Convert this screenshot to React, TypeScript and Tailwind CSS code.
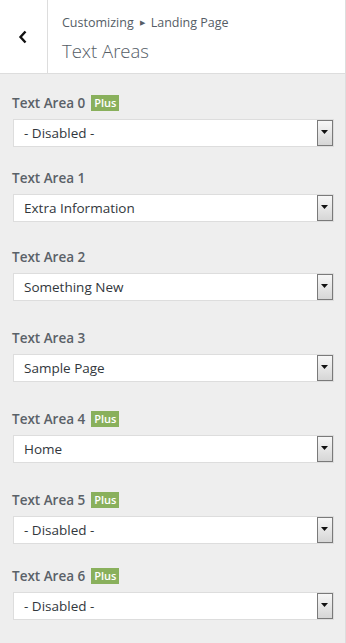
import React from "react";

type Item = { label: string; value: string; plus: boolean; mt: string };

const items: Item[] = [
  { label: "Text Area 0", value: "- Disabled -", plus: true, mt: "mt-0" },
  { label: "Text Area 1", value: "Extra Information", plus: false, mt: "mt-[21px]" },
  { label: "Text Area 2", value: "Something New", plus: false, mt: "mt-[25px]" },
  { label: "Text Area 3", value: "Sample Page", plus: false, mt: "mt-[27px]" },
  { label: "Text Area 4", value: "Home", plus: true, mt: "mt-[27px]" },
  { label: "Text Area 5", value: "- Disabled -", plus: true, mt: "mt-[27px]" },
  { label: "Text Area 6", value: "- Disabled -", plus: true, mt: "mt-[22px]" },
];

function Select({ value }: { value: string }) {
  return (
    <div className="flex h-[28px] w-[321px] items-stretch border border-[#dddddd] bg-white">
      <div className="flex flex-1 items-center pl-[10px] text-[13.5px] text-[#32373c]">{value}</div>
      <div className="flex w-[16px] items-center justify-center border border-[#7a7a7a] bg-gradient-to-b from-[#f7f7f7] to-[#d6d6d6]">
        <svg width="8" height="5" viewBox="0 0 8 5" className="-mt-[2px]">
          <path d="M0 0 H7 L3.5 4 Z" fill="#111" />
        </svg>
      </div>
    </div>
  );
}

export default function App() {
  return (
    <div
      className="flex h-[643px] w-[346px] flex-col border-r border-[#dddddd] bg-[#eeeeee]"
      style={{ fontFamily: '"Open Sans", "Noto Sans", sans-serif' }}
    >
      <div className="flex h-[74px] border-b border-[#dddddd] bg-white">
        <div className="flex w-[48px] items-center justify-center border-r border-[#dddddd]">
          <svg width="10" height="14" viewBox="0 0 10 14" className="mr-[2px] mt-[1px]">
            <path d="M7.5 1.5 L2.5 7 L7.5 12.5" fill="none" stroke="#111" strokeWidth="2.4" />
          </svg>
        </div>
        <div className="flex flex-col pl-[14px] pt-[13px]">
          <div className="flex items-center text-[12.5px] leading-[20px] text-[#555d66]">
            <span>Customizing</span>
            <span className="mx-[6px] text-[7px]">▶</span>
            <span>Landing Page</span>
          </div>
          <div className="mt-[5px] text-[18.5px] font-light leading-[26px] text-[#555d66]">Text Areas</div>
        </div>
      </div>
      <div className="flex flex-col pl-[13px] pt-[19px]">
        {items.map((it) => (
          <div key={it.label} className={`flex flex-col ${it.mt}`}>
            <div className="mb-[6px] flex h-[20px] items-center">
              <span className="-ml-[1px] text-[13.5px] font-semibold text-[#5a6168]">{it.label}</span>
              {it.plus && (
                <span className="ml-[6px] flex h-[16px] items-center bg-[#89b05c] px-[3px] text-[11px] font-semibold text-white">
                  Plus
                </span>
              )}
            </div>
            <Select value={it.value} />
          </div>
        ))}
      </div>
    </div>
  );
}
